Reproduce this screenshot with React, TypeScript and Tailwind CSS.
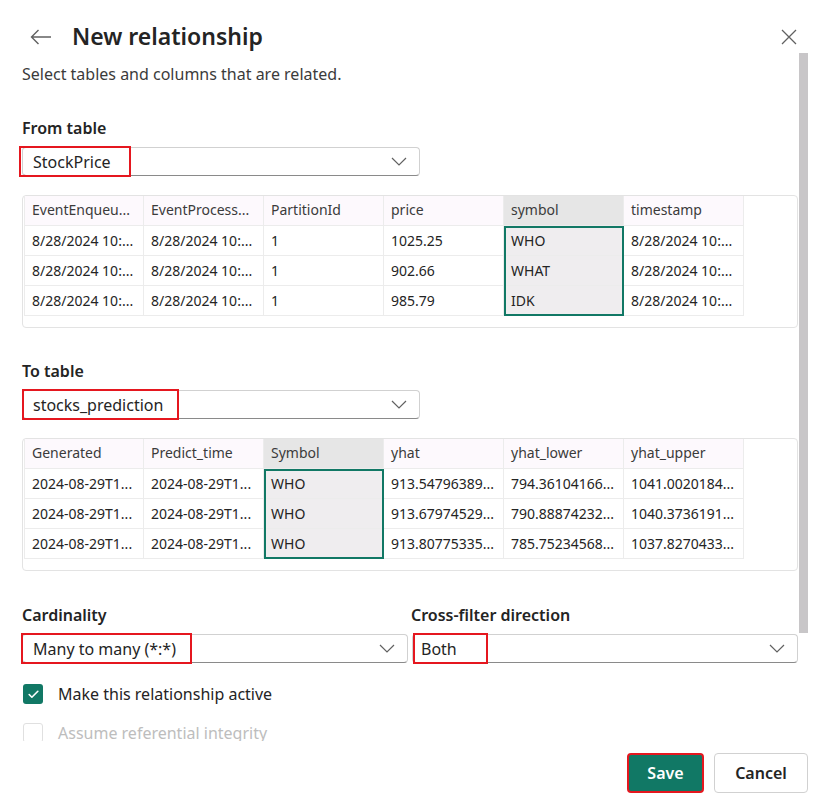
import { Check } from "lucide-react";

const font = { fontFamily: '"Noto Sans", "Open Sans", sans-serif' };

type Table = { cols: string[]; rows: string[][]; selected: number };

const fromTable: Table = {
  cols: ["EventEnqueu...", "EventProcess...", "PartitionId", "price", "symbol", "timestamp"],
  rows: [
    ["8/28/2024 10:...", "8/28/2024 10:...", "1", "1025.25", "WHO", "8/28/2024 10:..."],
    ["8/28/2024 10:...", "8/28/2024 10:...", "1", "902.66", "WHAT", "8/28/2024 10:..."],
    ["8/28/2024 10:...", "8/28/2024 10:...", "1", "985.79", "IDK", "8/28/2024 10:..."],
  ],
  selected: 4,
};

const toTable: Table = {
  cols: ["Generated", "Predict_time", "Symbol", "yhat", "yhat_lower", "yhat_upper"],
  rows: [
    ["2024-08-29T1...", "2024-08-29T1...", "WHO", "913.54796389...", "794.36104166...", "1041.0020184..."],
    ["2024-08-29T1...", "2024-08-29T1...", "WHO", "913.67974529...", "790.88874232...", "1040.3736191..."],
    ["2024-08-29T1...", "2024-08-29T1...", "WHO", "913.80775335...", "785.75234568...", "1037.8270433..."],
  ],
  selected: 2,
};

function Chevron() {
  return (
    <svg width="16" height="9" viewBox="0 0 16 9" fill="none" className="shrink-0">
      <path d="M1 1 L8 8 L15 1" stroke="#616161" strokeWidth="1.2" />
    </svg>
  );
}

// red box marks the chosen value, as in the annotated screenshot
function Dropdown({ value, boxClass }: { value: string; boxClass: string }) {
  return (
    <div className="flex h-[29px] items-center justify-between rounded-[4px] border border-[#d1d1d1] border-b-[#8a8a8a] pr-[12px]">
      <span
        className={
          "-my-[2px] flex h-[31px] items-center border-2 border-[#e5171f] text-[16px] text-[#242424] " + boxClass
        }
      >
        {value}
      </span>
      <Chevron />
    </div>
  );
}

function DataTable({ t }: { t: Table }) {
  return (
    <div className="h-[133px] rounded-[4px] border border-[#e3e3e3] pl-px">
      <div className="flex">
        {t.cols.map((c, ci) => {
          const sel = ci === t.selected;
          return (
            <div key={c} className={"flex w-[120px] flex-col " + (ci === 0 ? "border-l border-[#ececec]" : "")}>
              <div
                className={
                  "flex h-[30px] items-center border-b border-r border-[#ececec] pb-[3px] pl-[7px] text-[14px] text-[#3b3b3b] " +
                  (sel ? "bg-[#e6e6e6]" : "bg-[#fdf9fd]")
                }
              >
                {c}
              </div>
              <div className={sel ? "bg-[#efedef] outline-2 -outline-offset-2 outline-[#117865]" : ""}>
                {t.rows.map((r, ri) => (
                  <div
                    key={ri}
                    className="flex h-[30px] items-center border-b border-r border-[#ececec] pl-[7px] text-[14px] text-[#242424]"
                  >
                    {r[ci]}
                  </div>
                ))}
              </div>
            </div>
          );
        })}
      </div>
    </div>
  );
}

export default function App() {
  return (
    <div className="flex h-[812px] w-[826px] flex-col overflow-hidden bg-white" style={font}>
      <div className="flex h-[53px] items-start pl-[30px] pr-[29px] pt-[21px]">
        <svg width="22" height="16" viewBox="0 0 22 16" fill="none" className="mt-[8px]">
          <path d="M21 8 H1.5 M8.5 1 L1.5 8 L8.5 15" stroke="#616161" strokeWidth="1.4" />
        </svg>
        <h1 className="ml-[20px] text-[23px] font-semibold leading-[30px] text-[#242424]">New relationship</h1>
        <svg width="16" height="16" viewBox="0 0 16 16" fill="none" className="ml-auto mt-[8px]">
          <path d="M1 1 L15 15 M15 1 L1 15" stroke="#616161" strokeWidth="1.3" />
        </svg>
      </div>

      <div className="flex h-[688px] overflow-hidden">
        <div className="w-[798px] shrink-0 pl-[22px]">
          <p className="mt-[11px] text-[16px] leading-[20px] text-[#3b3b3b]">Select tables and columns that are related.</p>

          <div className="mt-[34px] text-[16px] font-semibold leading-[20px] text-[#242424]">From table</div>
          <div className="mt-[9px] w-[398px]">
            <Dropdown value="StockPrice" boxClass="-ml-[4px] w-[112px] pl-[12px]" />
          </div>
          <div className="mt-[19px]">
            <DataTable t={fromTable} />
          </div>

          <div className="mt-[33px] text-[16px] font-semibold leading-[20px] text-[#242424]">To table</div>
          <div className="mt-[9px] w-[398px]">
            <Dropdown value="stocks_prediction" boxClass="-ml-px w-[157px] pl-[9px]" />
          </div>
          <div className="mt-[19px]">
            <DataTable t={toTable} />
          </div>

          <div className="mt-[34px] grid grid-cols-2 gap-x-[4px]">
            <div className="text-[16px] font-semibold leading-[20px] text-[#242424]">Cardinality</div>
            <div className="-ml-px text-[16px] font-semibold leading-[20px] text-[#242424]">Cross-filter direction</div>
            <div className="mt-[9px]">
              <Dropdown value="Many to many (*:*)" boxClass="-ml-[2px] w-[171px] pl-[10px]" />
            </div>
            <div className="mt-[9px]">
              <Dropdown value="Both" boxClass="w-[75px] pl-[6px]" />
            </div>
          </div>

          <label className="mt-[21px] flex h-[20px] items-center gap-[15px] text-[16px] text-[#242424]">
            <span className="ml-px flex h-[20px] w-[20px] items-center justify-center rounded-[3px] bg-[#117865]">
              <Check className="h-[13px] w-[13px] text-white" strokeWidth={3} />
            </span>
            Make this relationship active
          </label>
          <label className="mt-[19px] flex h-[20px] items-center gap-[15px] text-[16px] text-[#bdbdbd]">
            <span className="ml-px h-[20px] w-[20px] rounded-[3px] border border-[#e0e0e0]" />
            Assume referential integrity
          </label>
        </div>
        <div className="ml-[1px] w-[9px]">
          <div className="h-[580px] bg-[#c8c6c8]" />
        </div>
      </div>

      <div className="flex flex-1 items-start justify-end gap-[10px] pr-[18px] pt-[12px]">
        <button
          type="button"
          className="h-[40px] w-[77px] rounded-[4px] border-2 border-[#e5171f] bg-[#117865] text-[16px] font-semibold text-white"
        >
          Save
        </button>
        <button
          type="button"
          className="h-[40px] w-[94px] rounded-[4px] border border-[#d1d1d1] bg-white text-[16px] font-semibold text-[#242424]"
        >
          Cancel
        </button>
      </div>
    </div>
  );
}
